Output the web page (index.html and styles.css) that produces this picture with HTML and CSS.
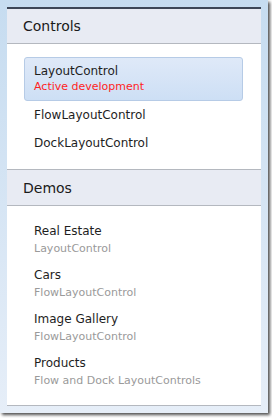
FILE: index.html
```html
<!DOCTYPE html>
<html>
<head>
<meta charset="utf-8">
<link rel="stylesheet" href="styles.css">
</head>
<body>
<div class="frame">
  <div class="panel">
    <div class="group">
      <div class="group-header">Controls</div>
      <div class="group-body controls">
        <div class="item selected">
          <div class="title">LayoutControl</div>
          <div class="note">Active development</div>
        </div>
        <div class="item">
          <div class="title">FlowLayoutControl</div>
        </div>
        <div class="item">
          <div class="title">DockLayoutControl</div>
        </div>
      </div>
    </div>
    <div class="group">
      <div class="group-header">Demos</div>
      <div class="group-body demos">
        <div class="item demo">
          <div class="title">Real Estate</div>
          <div class="sub">LayoutControl</div>
        </div>
        <div class="item demo">
          <div class="title">Cars</div>
          <div class="sub">FlowLayoutControl</div>
        </div>
        <div class="item demo">
          <div class="title">Image Gallery</div>
          <div class="sub">FlowLayoutControl</div>
        </div>
        <div class="item demo">
          <div class="title">Products</div>
          <div class="sub">Flow and Dock LayoutControls</div>
        </div>
      </div>
    </div>
  </div>
</div>
</body>
</html>
```
FILE: styles.css
```css
html, body {
  margin: 0;
  padding: 0;
  background: #ffffff;
}
body {
  font-family: "DejaVu Sans", Verdana, sans-serif;
  width: 272px;
  height: 418px;
  overflow: hidden;
}
.frame {
  width: 268px;
  height: 413px;
  box-sizing: border-box;
  padding: 7px 7px 0 7px;
  background: linear-gradient(to bottom, #c6dcf0 0%, #d6e5f4 50%, #e6eef8 100%);
  box-shadow: 2px 2px 3px rgba(0, 0, 0, 0.7);
}
.panel {
  width: 254px;
  height: 399px;
  box-sizing: border-box;
  background: #ffffff;
  border-top: 2px solid #3d4657;
  border-bottom: 1px solid #b4b8bf;
}
.group-header {
  height: 35px;
  box-sizing: border-box;
  padding-left: 16px;
  display: flex;
  align-items: center;
  font-size: 14px;
  color: #1a1a1a;
  background: #e8ebf3;
  border-bottom: 1px solid #b4b8bf;
}
.group + .group .group-header {
  border-top: 1px solid #b4b8bf;
  height: 37px;
}
.group-body {
  padding: 13px 18px 12px 17px;
}
.demos {
  padding-top: 13px;
}
.item {
  border: 1px solid transparent;
  border-radius: 3px;
  padding: 5px 9px;
}
.item.demo {
  padding: 3px 9px;
}
.item .title {
  font-size: 12px;
  line-height: 16px;
  color: #1e1e1e;
}
.item .note {
  font-size: 11px;
  line-height: 16px;
  color: #ff1e1e;
}
.item .sub {
  font-size: 11px;
  line-height: 20px;
  color: #9a9a9a;
}
.item.selected {
  border-color: #b6cbe6;
  background: linear-gradient(to bottom, #dfe9f8 0%, #cddff5 100%);
}
```
